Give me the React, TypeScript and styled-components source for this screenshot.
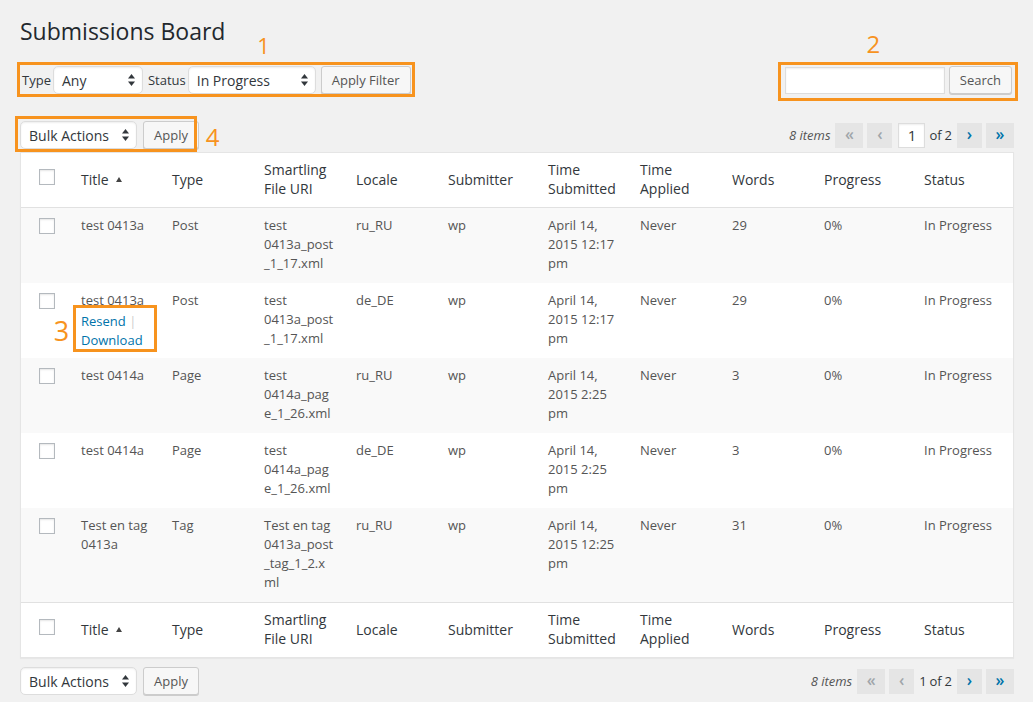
import styled, { createGlobalStyle } from "styled-components";

const ORANGE = "#f7931e";

type Submission = {
  title: string;
  type: string;
  uri: string;
  locale: string;
  submitter: string;
  submitted: string;
  applied: string;
  words: string;
  progress: string;
  status: string;
  actions?: boolean;
};

const rows: Submission[] = [
  { title: "test 0413a", type: "Post", uri: "test 0413a_post_1_17.xml", locale: "ru_RU", submitter: "wp", submitted: "April 14, 2015 12:17 pm", applied: "Never", words: "29", progress: "0%", status: "In Progress" },
  { title: "test 0413a", type: "Post", uri: "test 0413a_post_1_17.xml", locale: "de_DE", submitter: "wp", submitted: "April 14, 2015 12:17 pm", applied: "Never", words: "29", progress: "0%", status: "In Progress", actions: true },
  { title: "test 0414a", type: "Page", uri: "test 0414a_page_1_26.xml", locale: "ru_RU", submitter: "wp", submitted: "April 14, 2015 2:25 pm", applied: "Never", words: "3", progress: "0%", status: "In Progress" },
  { title: "test 0414a", type: "Page", uri: "test 0414a_page_1_26.xml", locale: "de_DE", submitter: "wp", submitted: "April 14, 2015 2:25 pm", applied: "Never", words: "3", progress: "0%", status: "In Progress" },
  { title: "Test en tag 0413a", type: "Tag", uri: "Test en tag 0413a_post_tag_1_2.xml", locale: "ru_RU", submitter: "wp", submitted: "April 14, 2015 12:25 pm", applied: "Never", words: "31", progress: "0%", status: "In Progress" },
];

const headers = ["Title", "Type", "Smartling File URI", "Locale", "Submitter", "Time Submitted", "Time Applied", "Words", "Progress", "Status"];
const widths = [50, 91, 92, 92, 92, 100, 92, 92, 92, 100, 99];

const SelectArrows = () => (
  <svg width="7" height="12" viewBox="0 0 7 12">
    <path d="M3.5 0 L7 4.6 L0 4.6 Z" fill="#32373c" />
    <path d="M3.5 12 L7 7.4 L0 7.4 Z" fill="#32373c" />
  </svg>
);

const Select = ({ value, width }: { value: string; width: number }) => (
  <SelectBox $w={width}>
    <span>{value}</span>
    <SelectArrows />
  </SelectBox>
);

const HeaderRow = ({ foot }: { foot?: boolean }) => (
  <tr>
    <HeadCheck $foot={foot}>
      <Checkbox />
    </HeadCheck>
    {headers.map((h) => (
      <HeadCell key={h} $foot={foot}>
        {h}
        {h === "Title" && <SortArrow />}
      </HeadCell>
    ))}
  </tr>
);

const Pagination = ({ bottom }: { bottom?: boolean }) => (
  <Pager>
    <Count>8 items</Count>
    <PageBtn $w={28} $disabled>«</PageBtn>
    <PageBtn $w={25} $disabled>‹</PageBtn>
    {bottom ? (
      <PageText $bottom>1 of 2</PageText>
    ) : (
      <>
        <PageInput>1</PageInput>
        <PageText>of 2</PageText>
      </>
    )}
    <PageBtn $w={25}>›</PageBtn>
    <PageBtn $w={28}>»</PageBtn>
  </Pager>
);

const App = () => {
  return (
    <>
      <GlobalStyle />
      <Page>
        <Heading>Submissions Board</Heading>

        <FilterBar>
          <Annot>
            <Frame $t={-4} $r={-4} $b={-3} $l={-3} />
            <Marker $x={243.5} $y={-21} $size={22}>1</Marker>
            <Label>Type</Label>
            <Select value="Any" width={90} />
            <Label $gap>Status</Label>
            <Select value="In Progress" width={128} />
            <Button $ml={5}>Apply Filter</Button>
          </Annot>
          <Annot $right>
            <Frame $t={-4} $r={-6} $b={-7} $l={-7} />
            <Marker $x={88.5} $y={-22.5} $size={24}>2</Marker>
            <SearchInput />
            <Button $ml={4}>Search</Button>
          </Annot>
        </FilterBar>

        <NavBar>
          <Annot>
            <Frame $t={-5} $r={2} $b={-3} $l={-5} />
            <Marker $x={192.5} $y={16} $size={24}>4</Marker>
            <Select value="Bulk Actions" width={117} />
            <Button $ml={6}>Apply</Button>
          </Annot>
          <Pagination />
        </NavBar>

        <Table>
          <colgroup>
            {widths.map((w, i) => (
              <Col key={i} $w={w} />
            ))}
          </colgroup>
          <thead>
            <HeaderRow />
          </thead>
          <tbody>
            {rows.map((r, i) => (
              <BodyRow key={i} $alt={i % 2 === 0}>
                <CheckCell>
                  <Checkbox />
                </CheckCell>
                <Cell>
                  {r.title}
                  {r.actions && (
                    <Annot>
                      <Frame $t={-5} $r={-5} $b={-4} $l={-8} />
                      <Marker $x={-19.5} $y={20} $size={27}>3</Marker>
                      <RowActions>
                        <Link>Resend</Link>
                        <Sep> | </Sep>
                        <Link>Download</Link>
                      </RowActions>
                    </Annot>
                  )}
                </Cell>
                <Cell>{r.type}</Cell>
                <Cell>{r.uri}</Cell>
                <Cell>{r.locale}</Cell>
                <Cell>{r.submitter}</Cell>
                <Cell>{r.submitted}</Cell>
                <Cell>{r.applied}</Cell>
                <Cell>{r.words}</Cell>
                <Cell>{r.progress}</Cell>
                <Cell>{r.status}</Cell>
              </BodyRow>
            ))}
          </tbody>
          <tfoot>
            <HeaderRow foot />
          </tfoot>
        </Table>

        <NavBar $bottom>
          <Group>
            <Select value="Bulk Actions" width={117} />
            <Button $ml={6}>Apply</Button>
          </Group>
          <Pagination bottom />
        </NavBar>
      </Page>
    </>
  );
};

// global
const GlobalStyle = createGlobalStyle`
  html, body {
    margin: 0;
    background: #f1f1f1;
  }
  body {
    font-family: "Open Sans", "Liberation Sans", sans-serif;
    font-size: 13px;
    color: #444;
  }
`;

// layout
const Page = styled.div`
  padding: 0 19px 20px 20px;
`;

const Heading = styled.h1`
  margin: 0;
  padding-top: 17px;
  font-size: 23px;
  line-height: 29px;
  font-weight: 400;
  color: #23282d;
`;

const FilterBar = styled.div`
  display: flex;
  justify-content: space-between;
  align-items: center;
  margin-top: 20px;
  height: 28px;
`;

const NavBar = styled.div<{ $bottom?: boolean }>`
  display: flex;
  justify-content: space-between;
  align-items: center;
  height: 28px;
  margin-top: ${(p) => (p.$bottom ? 9 : 27)}px;
`;

const Group = styled.div`
  display: flex;
  align-items: center;
`;

// annotations drawn over the screenshot
const Annot = styled.div<{ $right?: boolean }>`
  position: relative;
  display: flex;
  align-items: center;
  margin-right: ${(p) => (p.$right ? 2 : 0)}px;
`;

const Frame = styled.span<{ $t: number; $r: number; $b: number; $l: number }>`
  position: absolute;
  top: ${(p) => p.$t}px;
  right: ${(p) => p.$r}px;
  bottom: ${(p) => p.$b}px;
  left: ${(p) => p.$l}px;
  border: 3px solid ${ORANGE};
  pointer-events: none;
  z-index: 2;
`;

const Marker = styled.span<{ $x: number; $y: number; $size: number }>`
  position: absolute;
  left: ${(p) => p.$x}px;
  top: ${(p) => p.$y}px;
  transform: translate(-50%, -50%);
  font-size: ${(p) => p.$size}px;
  line-height: 1;
  color: ${ORANGE};
  font-family: "Open Sans", sans-serif;
  z-index: 2;
`;

// controls
const Label = styled.span<{ $gap?: boolean }>`
  font-size: 13px;
  color: #32373c;
  margin: 0 2px 0 ${(p) => (p.$gap ? 5 : 2)}px;
`;

const SelectBox = styled.div<{ $w: number }>`
  width: ${(p) => p.$w}px;
  height: 28px;
  box-sizing: border-box;
  display: flex;
  align-items: center;
  justify-content: space-between;
  padding: 0 7px 0 8px;
  background: #fff;
  border: 1px solid #ddd;
  border-radius: 5px;
  box-shadow: inset 0 1px 2px rgba(0, 0, 0, 0.07);
  font-size: 14px;
  color: #32373c;
`;

const Button = styled.button<{ $ml?: number }>`
  height: 28px;
  margin-left: ${(p) => p.$ml ?? 0}px;
  padding: 0 10px;
  font-family: inherit;
  font-size: 13px;
  line-height: 26px;
  color: #555;
  background: #f7f7f7;
  border: 1px solid #ccc;
  border-radius: 3px;
  box-shadow: 0 1px 0 #ccc;
`;

const SearchInput = styled.div`
  width: 160px;
  height: 27px;
  box-sizing: border-box;
  background: #fff;
  border: 1px solid #ddd;
  box-shadow: inset 0 1px 2px rgba(0, 0, 0, 0.07);
`;

// pagination
const Pager = styled.div`
  display: flex;
  align-items: center;
  gap: 4px;
  font-size: 13px;
  color: #555;
`;

const Count = styled.span`
  font-style: italic;
  margin-right: 1px;
`;

const PageBtn = styled.span<{ $w: number; $disabled?: boolean }>`
  display: flex;
  align-items: center;
  justify-content: center;
  width: ${(p) => p.$w}px;
  height: 25px;
  padding-bottom: 2px;
  box-sizing: border-box;
  background: #e5e5e5;
  color: ${(p) => (p.$disabled ? "#a0a5aa" : "#0073aa")};
  font-size: 16px;
  font-weight: 600;
`;

const PageInput = styled.span`
  display: flex;
  align-items: center;
  justify-content: center;
  width: 27px;
  height: 25px;
  margin-left: 2px;
  box-sizing: border-box;
  background: #fff;
  border: 1px solid #ddd;
  box-shadow: inset 0 1px 2px rgba(0, 0, 0, 0.07);
  font-size: 15px;
  color: #32373c;
`;

const PageText = styled.span<{ $bottom?: boolean }>`
  margin: 0 1px 0 ${(p) => (p.$bottom ? 1 : 0)}px;
  word-spacing: -0.5px;
  color: #32373c;
`;

// table
const Table = styled.table`
  width: 100%;
  margin-top: 3px;
  table-layout: fixed;
  border-collapse: separate;
  border-spacing: 0;
  background: #fff;
  border: 1px solid #e5e5e5;
  box-shadow: 0 1px 1px rgba(0, 0, 0, 0.04);
`;

const Col = styled.col<{ $w: number }>`
  width: ${(p) => p.$w}px;
`;

const HeadCell = styled.th<{ $foot?: boolean }>`
  padding: 7px 10px 9px;
  text-align: left;
  vertical-align: middle;
  font-size: 14px;
  font-weight: 400;
  line-height: 19px;
  color: #32373c;
  border-bottom: ${(p) => (p.$foot ? "none" : "1px solid #e1e1e1")};
  border-top: ${(p) => (p.$foot ? "1px solid #e1e1e1" : "none")};
`;

const HeadCheck = styled(HeadCell)`
  padding: 16px 0 0 18px;
  vertical-align: top;
`;

const SortArrow = styled.span`
  display: inline-block;
  margin-left: 7px;
  vertical-align: 3px;
  border-left: 3.5px solid transparent;
  border-right: 3.5px solid transparent;
  border-bottom: 5px solid #444;
`;

const BodyRow = styled.tr<{ $alt: boolean }>`
  background: ${(p) => (p.$alt ? "#f9f9f9" : "#fff")};
`;

const Cell = styled.td`
  padding: 8px 10px 10px;
  vertical-align: top;
  font-size: 13px;
  line-height: 19px;
  color: #555;
  overflow-wrap: break-word;
  word-wrap: break-word;
`;

const CheckCell = styled.td`
  padding: 10px 0 0 18px;
  vertical-align: top;
`;

const Checkbox = styled.span`
  display: block;
  width: 16px;
  height: 16px;
  box-sizing: border-box;
  background: #fff;
  border: 1px solid #b4b9be;
  box-shadow: inset 0 1px 2px rgba(0, 0, 0, 0.1);
`;

const RowActions = styled.div`
  margin: 2px 0 -2px;
  width: 71px;
`;

const Link = styled.a`
  color: #0073aa;
  text-decoration: none;
`;

const Sep = styled.span`
  color: #ccc;
`;

export default App;
